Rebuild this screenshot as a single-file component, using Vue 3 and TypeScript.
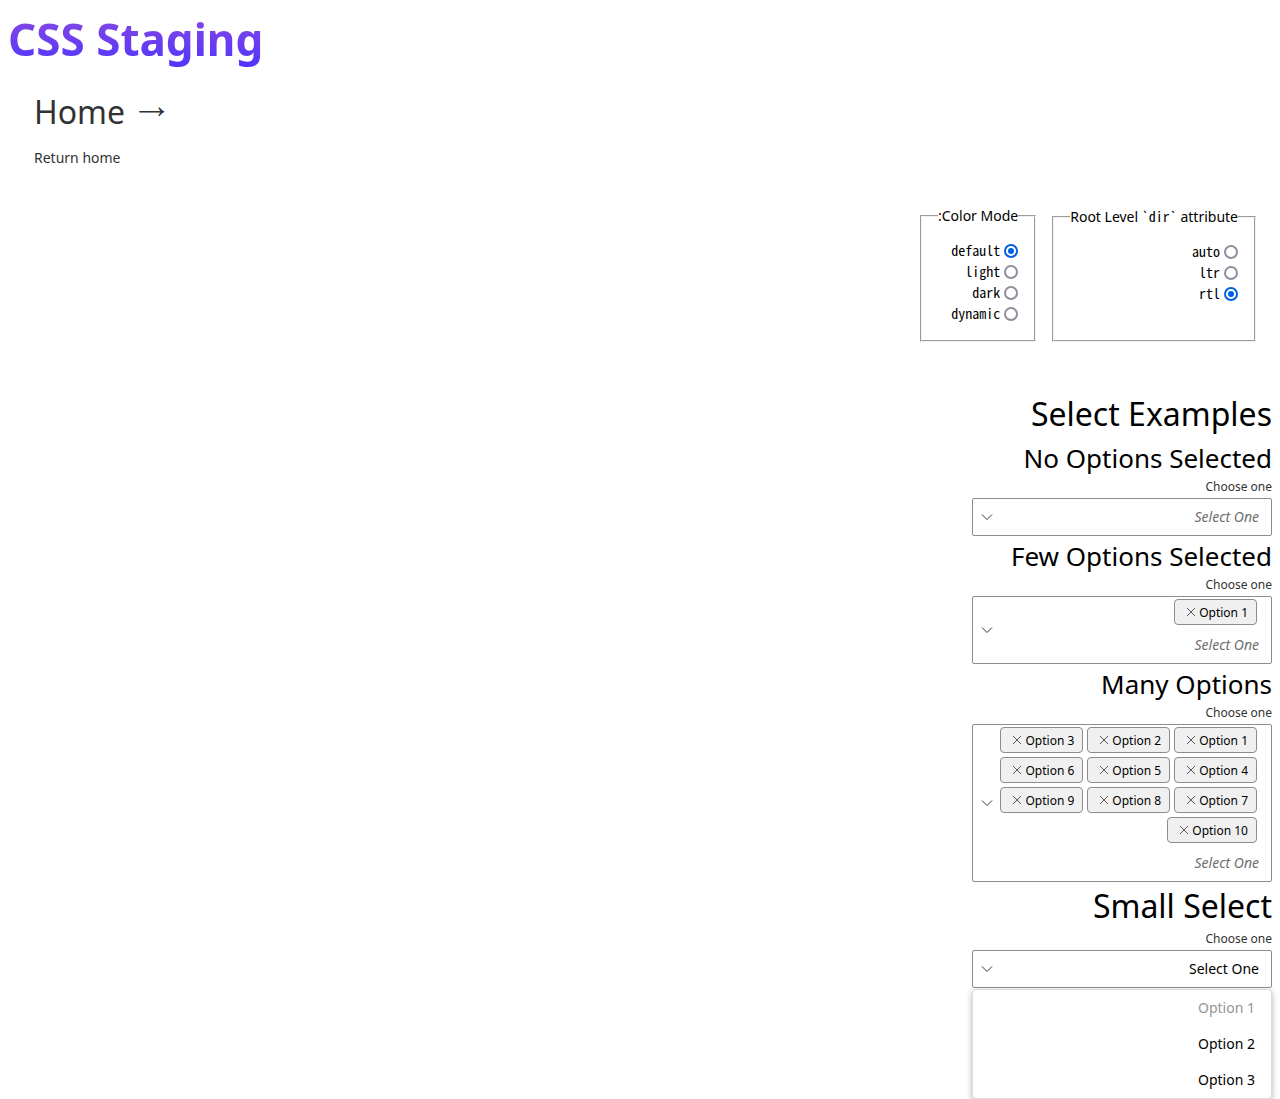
<script setup lang="ts">
import { ref } from 'vue'

interface MultiSelect {
  id: string
  title: string
  selected: string[]
}

const colorModes: string[] = ['default', 'light', 'dark', 'dynamic']
const directions: string[] = ['auto', 'ltr', 'rtl']
const colorMode = ref('default')
const direction = ref('rtl')

const multiSelects = ref<MultiSelect[]>([
  { id: 'none', title: 'No Options Selected', selected: [] },
  { id: 'few', title: 'Few Options Selected', selected: ['Option 1'] },
  {
    id: 'many',
    title: 'Many Options',
    selected: Array.from({ length: 10 }, (_, i) => `Option ${i + 1}`),
  },
])

const menuOptions = [
  { label: 'Option 1', disabled: true },
  { label: 'Option 2', disabled: false },
  { label: 'Option 3', disabled: false },
]

function remove(select: MultiSelect, option: string) {
  select.selected = select.selected.filter((item) => item !== option)
}
</script>

<template>
  <div class="page">
    <header>
      <h1>CSS Staging</h1>
      <a class="home" href="#">
        <span class="home-title">Home <span class="arrow">→</span></span>
        <span class="home-text">Return home</span>
      </a>
    </header>

    <main :dir="direction">
      <form class="settings">
        <fieldset>
          <legend>Root Level <code>`dir`</code> attribute</legend>
          <label v-for="item in directions" :key="item" class="choice">
            <input v-model="direction" type="radio" name="direction" :value="item" />
            <code>{{ item }}</code>
          </label>
        </fieldset>
        <fieldset>
          <legend>Color Mode:</legend>
          <label v-for="item in colorModes" :key="item" class="choice">
            <input v-model="colorMode" type="radio" name="color-mode" :value="item" />
            <code>{{ item }}</code>
          </label>
        </fieldset>
      </form>

      <h2>Select Examples</h2>
      <section v-for="select in multiSelects" :key="select.id">
        <h3>{{ select.title }}</h3>
        <label class="field-label" :for="select.id">Choose one</label>
        <div class="field">
          <div class="values">
            <ul v-if="select.selected.length" class="chips">
              <li v-for="option in select.selected" :key="option">
                <button class="chip" type="button" @click="remove(select, option)">
                  {{ option }}
                  <svg class="cross" viewBox="0 0 10 10" aria-hidden="true">
                    <path d="M1 1 L9 9 M9 1 L1 9" />
                  </svg>
                </button>
              </li>
            </ul>
            <input :id="select.id" type="text" placeholder="Select One" />
          </div>
          <button class="toggle" type="button" aria-label="Show options">
            <svg class="chevron" viewBox="0 0 12 12" aria-hidden="true">
              <path d="M1 3.5 L6 8.5 L11 3.5" />
            </svg>
          </button>
        </div>
      </section>

      <section>
        <h2>Small Select</h2>
        <label class="field-label" for="small">Choose one</label>
        <div class="field">
          <select id="small">
            <option>Select One</option>
          </select>
          <svg class="chevron select-chevron" viewBox="0 0 12 12" aria-hidden="true">
            <path d="M1 3.5 L6 8.5 L11 3.5" />
          </svg>
        </div>
        <ul class="menu" role="listbox" aria-label="Choose one">
          <li
            v-for="option in menuOptions"
            :key="option.label"
            role="option"
            :aria-disabled="option.disabled"
            :class="{ disabled: option.disabled }"
          >
            {{ option.label }}
          </li>
        </ul>
      </section>
    </main>
  </div>
</template>

<style>
body {
  margin: 0;
  background: #fff;
}
</style>

<style scoped>
* {
  box-sizing: border-box;
}

.page {
  padding: 8px 8px 0;
  color: #000;
  font: 14px/20px 'Noto Sans', sans-serif;
}

h1,
h2,
h3,
ul {
  margin: 0;
  padding: 0;
}

ul {
  list-style: none;
}

button,
input,
select {
  margin: 0;
  color: inherit;
  font: inherit;
}

h1 {
  width: fit-content;
  font-size: 44px;
  font-weight: 700;
  line-height: 62px;
  background: linear-gradient(to bottom, #8e4bde, #4d33ff);
  background-clip: text;
  color: transparent;
}

.home {
  display: inline-flex;
  flex-direction: column;
  gap: 12px;
  padding: 18px 26px 16px;
  color: #323232;
  text-decoration: none;
}

.home-title {
  font-size: 32px;
  line-height: 48px;
}

.arrow {
  font-family: 'Noto Sans Symbols', 'Noto Sans', sans-serif;
  font-size: 36px;
  line-height: 1;
}

.settings {
  display: flex;
  gap: 16px;
  padding: 22px 16px 48px;
}

fieldset {
  min-width: 0;
  margin: 0;
  padding: 14px 16px 16px;
  border: 2px groove #f0f0f0;
}

legend {
  padding: 0;
}

code {
  font-family: 'Noto Sans Mono CJK SC', 'Noto Sans Mono', monospace;
  font-size: 14px;
}

.choice {
  display: flex;
  align-items: center;
  gap: 4px;
  height: 21px;
}

.choice code {
  line-height: 18px;
  padding-bottom: 2px;
}

.choice input {
  width: 14px;
  height: 14px;
  appearance: none;
  border: 2px solid #8f8f9d;
  border-radius: 50%;
  background: #fff;
}

.choice input:checked {
  border-color: #0060df;
  background: #0060df;
  background-clip: content-box;
  padding: 2px;
}

h2 {
  font-size: 32px;
  font-weight: 400;
  line-height: 48px;
}

h3 {
  font-size: 26px;
  font-weight: 400;
  line-height: 40px;
}

.field-label {
  display: block;
  width: fit-content;
  margin-bottom: 2px;
  color: #323232;
  font-size: 12px;
  line-height: 18px;
}

.field {
  position: relative;
  display: flex;
  width: 300px;
  max-width: 100%;
  border: 1px solid #8c8c8c;
  border-radius: 2px;
}

.values {
  flex: 1;
  min-width: 0;
  padding-inline-start: 12px;
}

.chips {
  display: flex;
  flex-wrap: wrap;
}

.chip {
  display: flex;
  align-items: center;
  gap: 3px;
  height: 26px;
  margin: 2px;
  padding-block: 0;
  padding-inline: 8px 11px;
  border: 1px solid #8c8c8c;
  border-radius: 4px;
  background: #f0f0f0;
  font-size: 12px;
  line-height: normal;
}

.cross,
.chevron {
  flex: none;
  fill: none;
}

.cross {
  width: 10px;
  height: 10px;
  stroke: #5a5a5a;
}

.chevron {
  width: 12px;
  height: 12px;
  stroke: #323232;
}

.values input {
  display: block;
  width: 100%;
  height: 36px;
  padding: 0 0 2px;
  border: 0;
  outline: 0;
  background: transparent;
}

.values input::placeholder {
  color: #6e6e6e;
  font-style: italic;
  opacity: 1;
}

.toggle {
  display: flex;
  align-items: center;
  padding-block: 0;
  padding-inline: 4px 8px;
  border: 0;
  background: transparent;
}

select {
  width: 100%;
  height: 36px;
  padding: 0 12px;
  border: 0;
  appearance: none;
  background: transparent;
}

.select-chevron {
  position: absolute;
  inset-block-start: 12px;
  inset-inline-end: 8px;
  pointer-events: none;
}

.menu {
  width: 300px;
  max-width: 100%;
  margin-top: 1px;
  border: 1px solid #dcdcdc;
  border-radius: 4px;
  background: #fff;
  box-shadow: 0 2px 6px rgb(0 0 0 / 30%);
}

.menu li {
  padding: 0 16px;
  line-height: 36px;
}

.menu .disabled {
  color: #969696;
}
</style>
